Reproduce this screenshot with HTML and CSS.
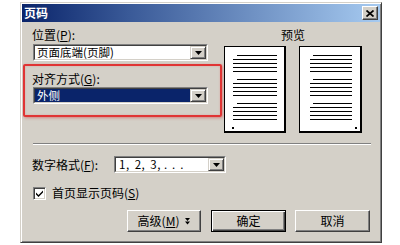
FILE: index.html
```html
<!DOCTYPE html>
<html lang="zh-CN">
<head>
<meta charset="utf-8">
<title>页码</title>
<link rel="stylesheet" href="styles.css">
</head>
<body>
<div class="dialog">
  <div class="titlebar">
    <span class="title">页码</span>
    <span class="close"><svg width="8" height="7" viewBox="0 0 8 7"><path d="M0.5 0.5L7.5 6.5M7.5 0.5L0.5 6.5" stroke="#000" stroke-width="1.7"/></svg></span>
  </div>
  <div class="body">
    <div class="top">
      <div class="left">
        <div class="label first">位置(<u>P</u>):</div>
        <div class="combo wide first-combo">
          <div class="combo-in">
            <span class="val">页面底端(页脚)</span>
            <span class="drop"><svg width="7" height="4" viewBox="0 0 7 4"><path d="M0 0h7l-3.5 4z" fill="#000"/></svg></span>
          </div>
        </div>
        <div class="highlight">
          <div class="label">对齐方式(<u>G</u>):</div>
          <div class="combo wide inner-combo">
            <div class="combo-in">
              <span class="val selected">外侧</span>
              <span class="drop"><svg width="7" height="4" viewBox="0 0 7 4"><path d="M0 0h7l-3.5 4z" fill="#000"/></svg></span>
            </div>
          </div>
        </div>
      </div>
      <div class="right">
        <div class="preview-label">预览</div>
        <div class="pages">
          <div class="page p1">
            <svg width="59" height="84" viewBox="0 0 59 84">
              <path d="M12 8.5H52M8 12.5H52M8 16.5H52M8 20.5H52M8 24.5H52M12 32.5H52M8 36.5H52M8 40.5H52M8 44.5H52M8 48.5H52M12 56.5H52M8 60.5H52M8 64.5H52M8 68.5H52M8 72.5H52" stroke="#000" stroke-width="1"/>
              <rect x="7" y="80" width="2" height="2" fill="#000"/>
            </svg>
          </div>
          <div class="page p2">
            <svg width="60" height="84" viewBox="0 0 60 84">
              <path d="M13 8.5H52M10 12.5H52M10 16.5H52M10 20.5H52M10 24.5H52M13 32.5H52M10 36.5H52M10 40.5H52M10 44.5H52M10 48.5H52M13 56.5H52M10 60.5H52M10 64.5H52M10 68.5H52M10 72.5H52" stroke="#000" stroke-width="1"/>
              <rect x="55" y="80" width="2" height="2" fill="#000"/>
            </svg>
          </div>
        </div>
      </div>
    </div>
    <div class="sep"></div>
    <div class="format-row">
      <span class="format-label">数字格式(<u>F</u>):</span>
      <div class="combo narrow">
        <div class="combo-in">
          <span class="val num">1, 2, 3, <span class="dots">...</span></span>
          <span class="drop"><svg width="7" height="4" viewBox="0 0 7 4"><path d="M0 0h7l-3.5 4z" fill="#000"/></svg></span>
        </div>
      </div>
    </div>
    <div class="check-row">
      <span class="checkbox"><svg width="7" height="7" viewBox="0 0 7 7"><path d="M0 2.5L2.5 5L7 0.5V2.5L2.5 7L0 4.5z" fill="#000"/></svg></span>
      <span class="check-label">首页显示页码(<u>S</u>)</span>
    </div>
    <div class="buttons">
      <div class="btn adv">高级(<u>M</u>)<svg class="chev" width="5" height="7" viewBox="0 0 5 7"><path d="M0 0h5L2.5 3z M0 3.5h5L2.5 6.5z" fill="#000"/></svg></div>
      <div class="btn ok">确定</div>
      <div class="btn cancel">取消</div>
    </div>
  </div>
</div>
</body>
</html>
```
FILE: styles.css
```css
html, body {
  margin: 0;
  padding: 0;
  background: #ffffff;
}

body {
  font-family: "Noto Sans CJK SC", "Noto Sans", sans-serif;
  font-size: 12px;
  color: #000;
}

u {
  text-decoration: underline;
  text-underline-offset: 1px;
}

.dialog {
  box-sizing: border-box;
  width: 362px;
  height: 241px;
  margin: 2px 0 0 20px;
  padding: 1px;
  background: #d4d0c8;
  border: 1px solid;
  border-color: #d4d0c8 #404040 #404040 #d4d0c8;
  box-shadow: inset 1px 1px #ffffff, inset -1px -1px #808080;
  display: flex;
  flex-direction: column;
}

.titlebar {
  height: 18px;
  background: linear-gradient(to right, #0a246a 0%, #3a5a98 30%, #a6caf0 100%);
  display: flex;
  align-items: center;
  justify-content: space-between;
}

.title {
  color: #fff;
  font-weight: bold;
  padding-left: 2px;
  line-height: 14px;
}

.close {
  box-sizing: border-box;
  width: 16px;
  height: 14px;
  margin-right: 2px;
  background: #d4d0c8;
  border: 1px solid;
  border-color: #ffffff #404040 #404040 #ffffff;
  box-shadow: inset -1px -1px #808080;
  display: flex;
  align-items: center;
  justify-content: center;
}

.body {
  display: flex;
  flex-direction: column;
}

.top {
  display: flex;
}

.left {
  width: 200px;
}

.label {
  line-height: 14px;
  height: 14px;
}

.label.first {
  margin: 6px 0 0 10px;
}

.combo {
  box-sizing: border-box;
  height: 17px;
  border: 1px solid;
  border-color: #808080 #ffffff #ffffff #808080;
  display: flex;
}

.combo-in {
  flex: 1;
  display: flex;
  border: 1px solid;
  border-color: #404040 #d4d0c8 #d4d0c8 #404040;
  background: #fff;
}

.combo.wide {
  width: 175px;
}

.first-combo {
  margin: 2px 0 0 11px;
}

.val {
  flex: 1;
  display: flex;
  align-items: center;
  padding-left: 2px;
  white-space: nowrap;
  font-size: 11.5px;
  line-height: 13px;
}

.val.selected {
  background: #0a246a;
  color: #fff;
}

.drop {
  box-sizing: border-box;
  width: 16px;
  background: #d4d0c8;
  border: 1px solid;
  border-color: #d4d0c8 #404040 #404040 #d4d0c8;
  box-shadow: inset 1px 1px #ffffff, inset -1px -1px #808080;
  display: flex;
  align-items: center;
  justify-content: center;
}

.highlight {
  box-sizing: border-box;
  width: 199px;
  margin: 3px 0 0 1px;
  padding: 6px 0 11px 7px;
  border: 2px solid #e03434;
  border-radius: 2px;
  box-shadow: 1px 1px 3px rgba(210, 40, 40, 0.45), inset 0 0 2px rgba(230, 80, 80, 0.35);
}

.inner-combo {
  margin: 1px 0 0 1px;
}

.right {
  margin-left: 2px;
  width: 138px;
}

.preview-label {
  margin-top: 6px;
  line-height: 14px;
  height: 14px;
  text-align: center;
}

.pages {
  margin-top: 4px;
  display: flex;
  gap: 13px;
}

.page {
  box-sizing: border-box;
  height: 87px;
  background: #fff;
  border-top: 1px solid #000;
  border-left: 1px solid #000;
  border-right: 2px solid #000;
  border-bottom: 2px solid #000;
}

.page svg {
  display: block;
}

.p1 {
  width: 62px;
}

.p2 {
  width: 63px;
}

.sep {
  margin: 10px 9px 0 11px;
  border-top: 1px solid #808080;
  border-bottom: 1px solid #ffffff;
}

.format-row {
  margin-top: 11px;
  padding-left: 10px;
  display: flex;
  align-items: center;
}

.format-label {
  width: 82px;
  line-height: 14px;
}

.combo.narrow {
  width: 112px;
}

.num {
  padding-left: 3px;
  word-spacing: 2px;
  letter-spacing: 0.5px;
}

.dots {
  letter-spacing: 5px;
  margin-left: 3px;
}

.check-row {
  margin-top: 13px;
  padding-left: 11px;
  display: flex;
  align-items: center;
}

.checkbox {
  box-sizing: border-box;
  width: 13px;
  height: 13px;
  background: #fff;
  border: 1px solid;
  border-color: #808080 #ffffff #ffffff #808080;
  box-shadow: inset 1px 1px #404040, inset -1px -1px #d4d0c8;
  display: flex;
  align-items: center;
  justify-content: center;
}

.check-label {
  margin-left: 6px;
  line-height: 14px;
}

.buttons {
  margin-top: 10px;
  padding-right: 10px;
  display: flex;
  justify-content: flex-end;
}

.btn {
  box-sizing: border-box;
  height: 22px;
  background: #d4d0c8;
  border: 1px solid;
  border-color: #ffffff #404040 #404040 #ffffff;
  box-shadow: inset -1px -1px #808080;
  display: flex;
  align-items: center;
  justify-content: center;
  line-height: 14px;
}

.adv {
  width: 74px;
  margin-right: 10px;
}

.chev {
  margin-left: 6px;
}

.ok {
  width: 75px;
  margin-right: 9px;
  border-color: #000;
  box-shadow: inset 1px 1px #ffffff, inset -1px -1px #404040, inset -2px -2px #808080;
}

.cancel {
  width: 75px;
}
```
